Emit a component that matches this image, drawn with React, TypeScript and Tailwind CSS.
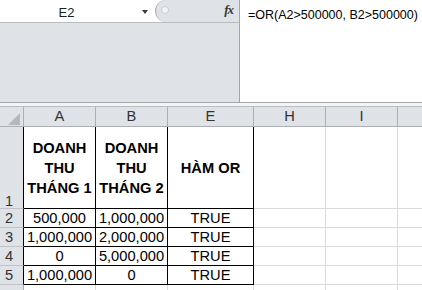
import React from 'react';

const rows = [
  ['500,000', '1,000,000', 'TRUE'],
  ['1,000,000', '2,000,000', 'TRUE'],
  ['0', '5,000,000', 'TRUE'],
  ['1,000,000', '0', 'TRUE'],
];

const headCell = 'bg-[#dfe2e7] border-b border-r border-[#abaeb3] flex items-center justify-center text-[#333] leading-[19px]';
const rowHead = 'bg-[#dfe2e7] border-b border-[#bfc3c8] flex items-center pl-[5px] text-[#333]';
const tableCell = 'border-b border-r border-black flex items-center justify-center text-black';
const plainCell = 'border-b border-r border-[#dadbdd]';

export default function App() {
  return (
    <div className="w-[422px] h-[290px] overflow-hidden bg-white font-['Liberation_Sans',Arial,sans-serif]">
      {/* name box + formula bar */}
      <div className="flex h-[103px] border-b border-[#a3a6aa]">
        <div className="w-[239px] flex flex-col bg-[#dfe2e7]">
          <div className="flex h-[23px] bg-white border-b border-[#b8bbbf]">
            <div className="w-[155px] flex items-center pt-[4px]">
              <span className="w-[133px] text-center text-[13px] text-[#1e1e1e]">E2</span>
              <span className="ml-[9px] -mt-[3px] w-0 h-0 border-l-[3.5px] border-r-[3.5px] border-t-[4px] border-l-transparent border-r-transparent border-t-[#3c3c3c]" />
            </div>
            <div className="flex-1 flex items-center justify-between bg-[#dfe2e7] rounded-l-full border-l border-[#a9adb2]">
              <span className="ml-[5px] -mt-[2px] w-[8px] h-[8px] rounded-full bg-[#f3f4f6] border border-[#c8cbcf]" />
              <span className="mr-[6px] -mt-[2px] italic font-bold text-[13px] text-[#3a3a3a] font-['Liberation_Serif',serif] tracking-[-1px]">fx</span>
            </div>
          </div>
        </div>
        <div className="flex-1 bg-white border-l border-[#a3a6aa] pl-[8px] pt-[7px] text-[12.5px] leading-[16px] text-black whitespace-nowrap">
          =OR(A2&gt;500000, B2&gt;500000)
        </div>
      </div>
      <div className="h-[4px] bg-[#f3f4f6] border-b border-[#b9bcc0]" />

      {/* sheet */}
      <div className="grid grid-cols-[24px_72px_72px_86px_72px_72px_1fr] grid-rows-[20px_82px_19px_19px_19px_19px_19px] text-[14.67px]">
        <div className={`${headCell} relative`}>
          <svg width="12" height="12" viewBox="0 0 12 12" className="absolute left-[8px] top-[6px]">
            <polygon points="12,0 12,12 0,12" fill="#b5b9be" />
          </svg>
        </div>
        <div className={headCell}>A</div>
        <div className={headCell}>B</div>
        <div className={headCell}>E</div>
        <div className={headCell}>H</div>
        <div className={headCell}>I</div>
        <div className="bg-[#dfe2e7] border-b border-[#abaeb3]" />

        {/* row 1 */}
        <div className={`${rowHead} border-r border-r-black items-end leading-[14px]`}>1</div>
        <div className={`${tableCell} font-bold text-center leading-[20px]`}>DOANH<br />THU<br />THÁNG 1</div>
        <div className={`${tableCell} font-bold text-center leading-[20px]`}>DOANH<br />THU<br />THÁNG 2</div>
        <div className={`${tableCell} font-bold leading-[20px]`}>HÀM OR</div>
        <div className={plainCell} />
        <div className={plainCell} />
        <div className="border-b border-[#dadbdd]" />

        {rows.map((r, i) => (
          <React.Fragment key={i}>
            <div className={`${rowHead} border-r border-r-black leading-[18px]`}>{i + 2}</div>
            {r.map((v, j) => (
              <div key={j} className={`${tableCell} leading-[18px]`}>{v}</div>
            ))}
            <div className={plainCell} />
            <div className={plainCell} />
            <div className="border-b border-[#dadbdd]" />
          </React.Fragment>
        ))}

        {/* row 6 (cut off) */}
        <div className="bg-[#dfe2e7] border-r border-[#abaeb3]" />
        <div className="border-r border-[#dadbdd]" />
        <div className="border-r border-[#dadbdd]" />
        <div className="border-r border-[#dadbdd]" />
        <div className="border-r border-[#dadbdd]" />
        <div className="border-r border-[#dadbdd]" />
        <div />
      </div>
    </div>
  );
}
